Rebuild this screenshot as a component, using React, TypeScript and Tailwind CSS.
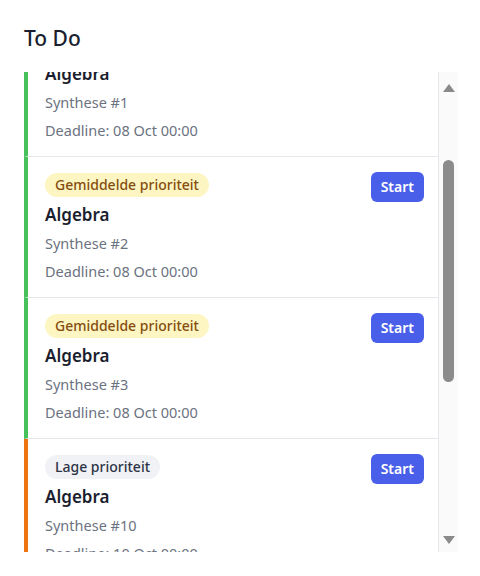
import { useEffect, useRef } from "react";

type Task = {
  id: number;
  priority: "medium" | "low";
  deadline: string;
};

const tasks: Task[] = [
  { id: 1, priority: "medium", deadline: "08 Oct 00:00" },
  { id: 2, priority: "medium", deadline: "08 Oct 00:00" },
  { id: 3, priority: "medium", deadline: "08 Oct 00:00" },
  { id: 10, priority: "low", deadline: "10 Oct 00:00" },
  { id: 11, priority: "low", deadline: "11 Oct 00:00" },
];

function PriorityBadge({ priority }: { priority: Task["priority"] }) {
  if (priority === "medium") {
    return (
      <span className="flex h-6 items-center rounded-full bg-[#fdf6c3] px-2.5 text-sm font-medium text-[#854d0e]">
        Gemiddelde prioriteit
      </span>
    );
  }
  return (
    <span className="flex h-6 items-center rounded-full bg-[#f1f2f5] px-2.5 text-sm font-medium text-[#2d3446]">
      Lage prioriteit
    </span>
  );
}

function TaskCard({ task }: { task: Task }) {
  const bar = task.priority === "low" ? "border-l-[#ee7412]" : "border-l-[#47c15b]";
  return (
    <div className={`flex items-start justify-between border-b border-l-4 border-r border-gray-200 pb-4 pl-[17px] pr-[14px] pt-4 ${bar}`}>
      <div className="flex flex-col items-start">
        <PriorityBadge priority={task.priority} />
        <h3 className="mt-1.5 text-[17px] font-semibold leading-6 text-[#1b1e2e]">Algebra</h3>
        <p className="mt-1.5 text-[14.5px] leading-5 text-[#6b7280]">Synthese #{task.id}</p>
        <p className="mt-2 text-[14.5px] leading-5 text-[#6b7280]">Deadline: {task.deadline}</p>
      </div>
      <button className="-mt-px h-[30px] rounded-md bg-[#4a5fe9] px-2.5 text-sm font-semibold text-white">
        Start
      </button>
    </div>
  );
}

function Scrollbar() {
  return (
    <div className="flex w-[19px] flex-col items-center bg-[#fafafa] pb-2 pt-3">
      <svg width="12" height="8" viewBox="0 0 12 8">
        <polygon points="6,0 12,8 0,8" fill="#8a8a8a" />
      </svg>
      <div className="mt-[68px] h-[222px] w-[11px] rounded-full bg-[#8b8b8b]" />
      <div className="flex-1" />
      <svg width="12" height="8" viewBox="0 0 12 8">
        <polygon points="0,0 12,0 6,8" fill="#8a8a8a" />
      </svg>
    </div>
  );
}

export default function App() {
  const listRef = useRef<HTMLDivElement>(null);

  useEffect(() => {
    if (listRef.current) listRef.current.scrollTop = 56;
  }, []);

  return (
    <div className="bg-white px-6 pt-6 font-['Noto_Sans',sans-serif]">
      <h2 className="mb-5 text-[21px] font-medium leading-7 text-[#1b1e2e]">To Do</h2>
      <div className="flex h-[480px] w-[434px]">
        <div ref={listRef} className="flex-1 overflow-hidden">
          {tasks.map((t) => (
            <TaskCard key={t.id} task={t} />
          ))}
        </div>
        <Scrollbar />
      </div>
    </div>
  );
}
